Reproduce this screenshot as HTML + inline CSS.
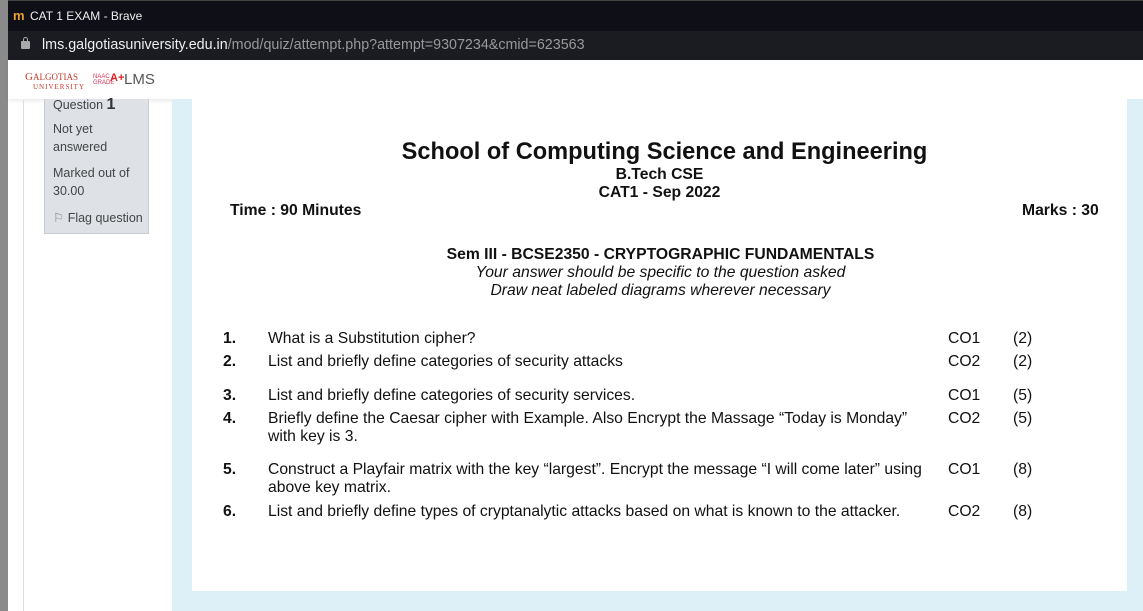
<!DOCTYPE html>
<html><head><meta charset="utf-8"><style>
*{margin:0;padding:0;box-sizing:border-box}
body{width:1143px;height:611px;overflow:hidden;position:relative;background:#fff;font-family:"Liberation Sans",Arial,sans-serif}
.a{position:absolute}
.b{font-weight:bold}
.q{position:absolute;font-size:15.7px;color:#111;line-height:18px}
</style></head><body>
<div class="a" style="left:0;top:0;width:8px;height:611px;background:#8a8a8a"></div>
<div class="a" style="left:8px;top:0;width:1135px;height:31px;background:#0f0f17;border-top:1px solid #444"></div>
<div class="a" style="left:13px;top:8px;font-size:13px;color:#e8a030;font-weight:bold">m</div>
<div class="a" style="left:30px;top:9px;font-size:12px;color:#eee">CAT 1 EXAM - Brave</div>
<div class="a" style="left:8px;top:31px;width:1135px;height:29px;background:#1b1c22"></div>
<div class="a" style="left:21px;top:41px;width:9px;height:8px;background:#aaa;border-radius:1px"></div>
<div class="a" style="left:23px;top:37px;width:5px;height:6px;border:1.5px solid #aaa;border-bottom:none;border-radius:3px 3px 0 0"></div>
<div class="a" style="left:42px;top:37px;font-size:14.3px;color:#eee">lms.galgotiasuniversity.edu.in<span style="color:#999">/mod/quiz/attempt.php?attempt=9307234&amp;cmid=623563</span></div>
<div class="a" style="left:8px;top:60px;width:1135px;height:39px;background:#fff;box-shadow:0 2px 4px rgba(0,0,0,.08)"></div>
<div class="a" style="left:25px;top:73px;font-size:11px;color:#c0392b;font-family:'Liberation Serif',serif;line-height:9px">G<span style="font-size:9px">ALGOTIAS</span><br><span style="font-size:7px;margin-left:8px;letter-spacing:1px">UNIVERSITY</span></div>
<div class="a" style="left:93px;top:74px;font-size:6px;color:#d35;line-height:6px">NAAC<br>GRADE</div>
<div class="a" style="left:110px;top:72px;font-size:11px;color:#d22;font-weight:bold">A+</div>
<div class="a" style="left:124px;top:71px;font-size:15px;color:#555">LMS</div>
<div class="a" style="left:23px;top:100px;width:1px;height:511px;background:#ddd"></div>
<div class="a" style="left:44px;top:99px;width:105px;height:135px;background:#dee2e6;border:1px solid #c8ccd0;border-top:none"></div>
<div class="a" style="left:53px;top:96px;font-size:12.5px;color:#444;line-height:18px">Question <b style="font-size:16px;color:#333">1</b></div>
<div class="a" style="left:53px;top:120px;font-size:12.5px;color:#444;line-height:18px">Not yet<br>answered</div>
<div class="a" style="left:53px;top:164px;font-size:12.5px;color:#444;line-height:18px">Marked out of<br>30.00</div>
<div class="a" style="left:53px;top:209px;font-size:12.5px;color:#444;line-height:18px"><span style="color:#888">⚐</span> Flag question</div>
<div class="a" style="left:172px;top:99px;width:971px;height:512px;background:#def0f7"></div>
<div class="a" style="left:192px;top:99px;width:935px;height:492px;background:#fff"></div>
<div class="a b" style="left:197px;top:139px;width:935px;text-align:center;font-size:23.6px;color:#111">School of Computing Science and Engineering</div>
<div class="a b" style="left:192px;top:166px;width:935px;text-align:center;font-size:15.7px;line-height:18px;color:#111">B.Tech CSE<br>CAT1 - Sep 2022</div>
<div class="a b" style="left:230px;top:202px;font-size:15.7px;color:#111">Time : 90 Minutes</div>
<div class="a b" style="left:1022px;top:202px;font-size:15.7px;color:#111">Marks : 30</div>
<div class="a" style="left:193px;top:246px;width:935px;text-align:center;font-size:15.7px;line-height:18px;color:#111"><b>Sem III - BCSE2350 - CRYPTOGRAPHIC FUNDAMENTALS</b><br><i>Your answer should be specific to the question asked</i><br><i>Draw neat labeled diagrams wherever necessary</i></div>
<div class="q b" style="left:223px;top:330px">1.</div><div class="q" style="left:268px;top:330px">What is a Substitution cipher?</div><div class="q" style="left:948px;top:330px">CO1</div><div class="q" style="left:1013px;top:330px">(2)</div>
<div class="q b" style="left:223px;top:353px">2.</div><div class="q" style="left:268px;top:353px">List and briefly define categories of security attacks</div><div class="q" style="left:948px;top:353px">CO2</div><div class="q" style="left:1013px;top:353px">(2)</div>
<div class="q b" style="left:223px;top:387px">3.</div><div class="q" style="left:268px;top:387px">List and briefly define categories of security services.</div><div class="q" style="left:948px;top:387px">CO1</div><div class="q" style="left:1013px;top:387px">(5)</div>
<div class="q b" style="left:223px;top:410px">4.</div><div class="q" style="left:268px;top:410px;white-space:nowrap">Briefly define the Caesar cipher with Example. Also Encrypt the Massage “Today is Monday”<br>with key is 3.</div><div class="q" style="left:948px;top:410px">CO2</div><div class="q" style="left:1013px;top:410px">(5)</div>
<div class="q b" style="left:223px;top:461px">5.</div><div class="q" style="left:268px;top:461px;white-space:nowrap">Construct a Playfair matrix with the key “largest”. Encrypt the message “I will come later” using<br>above key matrix.</div><div class="q" style="left:948px;top:461px">CO1</div><div class="q" style="left:1013px;top:461px">(8)</div>
<div class="q b" style="left:223px;top:503px">6.</div><div class="q" style="left:268px;top:503px;white-space:nowrap">List and briefly define types of cryptanalytic attacks based on what is known to the attacker.</div><div class="q" style="left:948px;top:503px">CO2</div><div class="q" style="left:1013px;top:503px">(8)</div>
</body></html>
